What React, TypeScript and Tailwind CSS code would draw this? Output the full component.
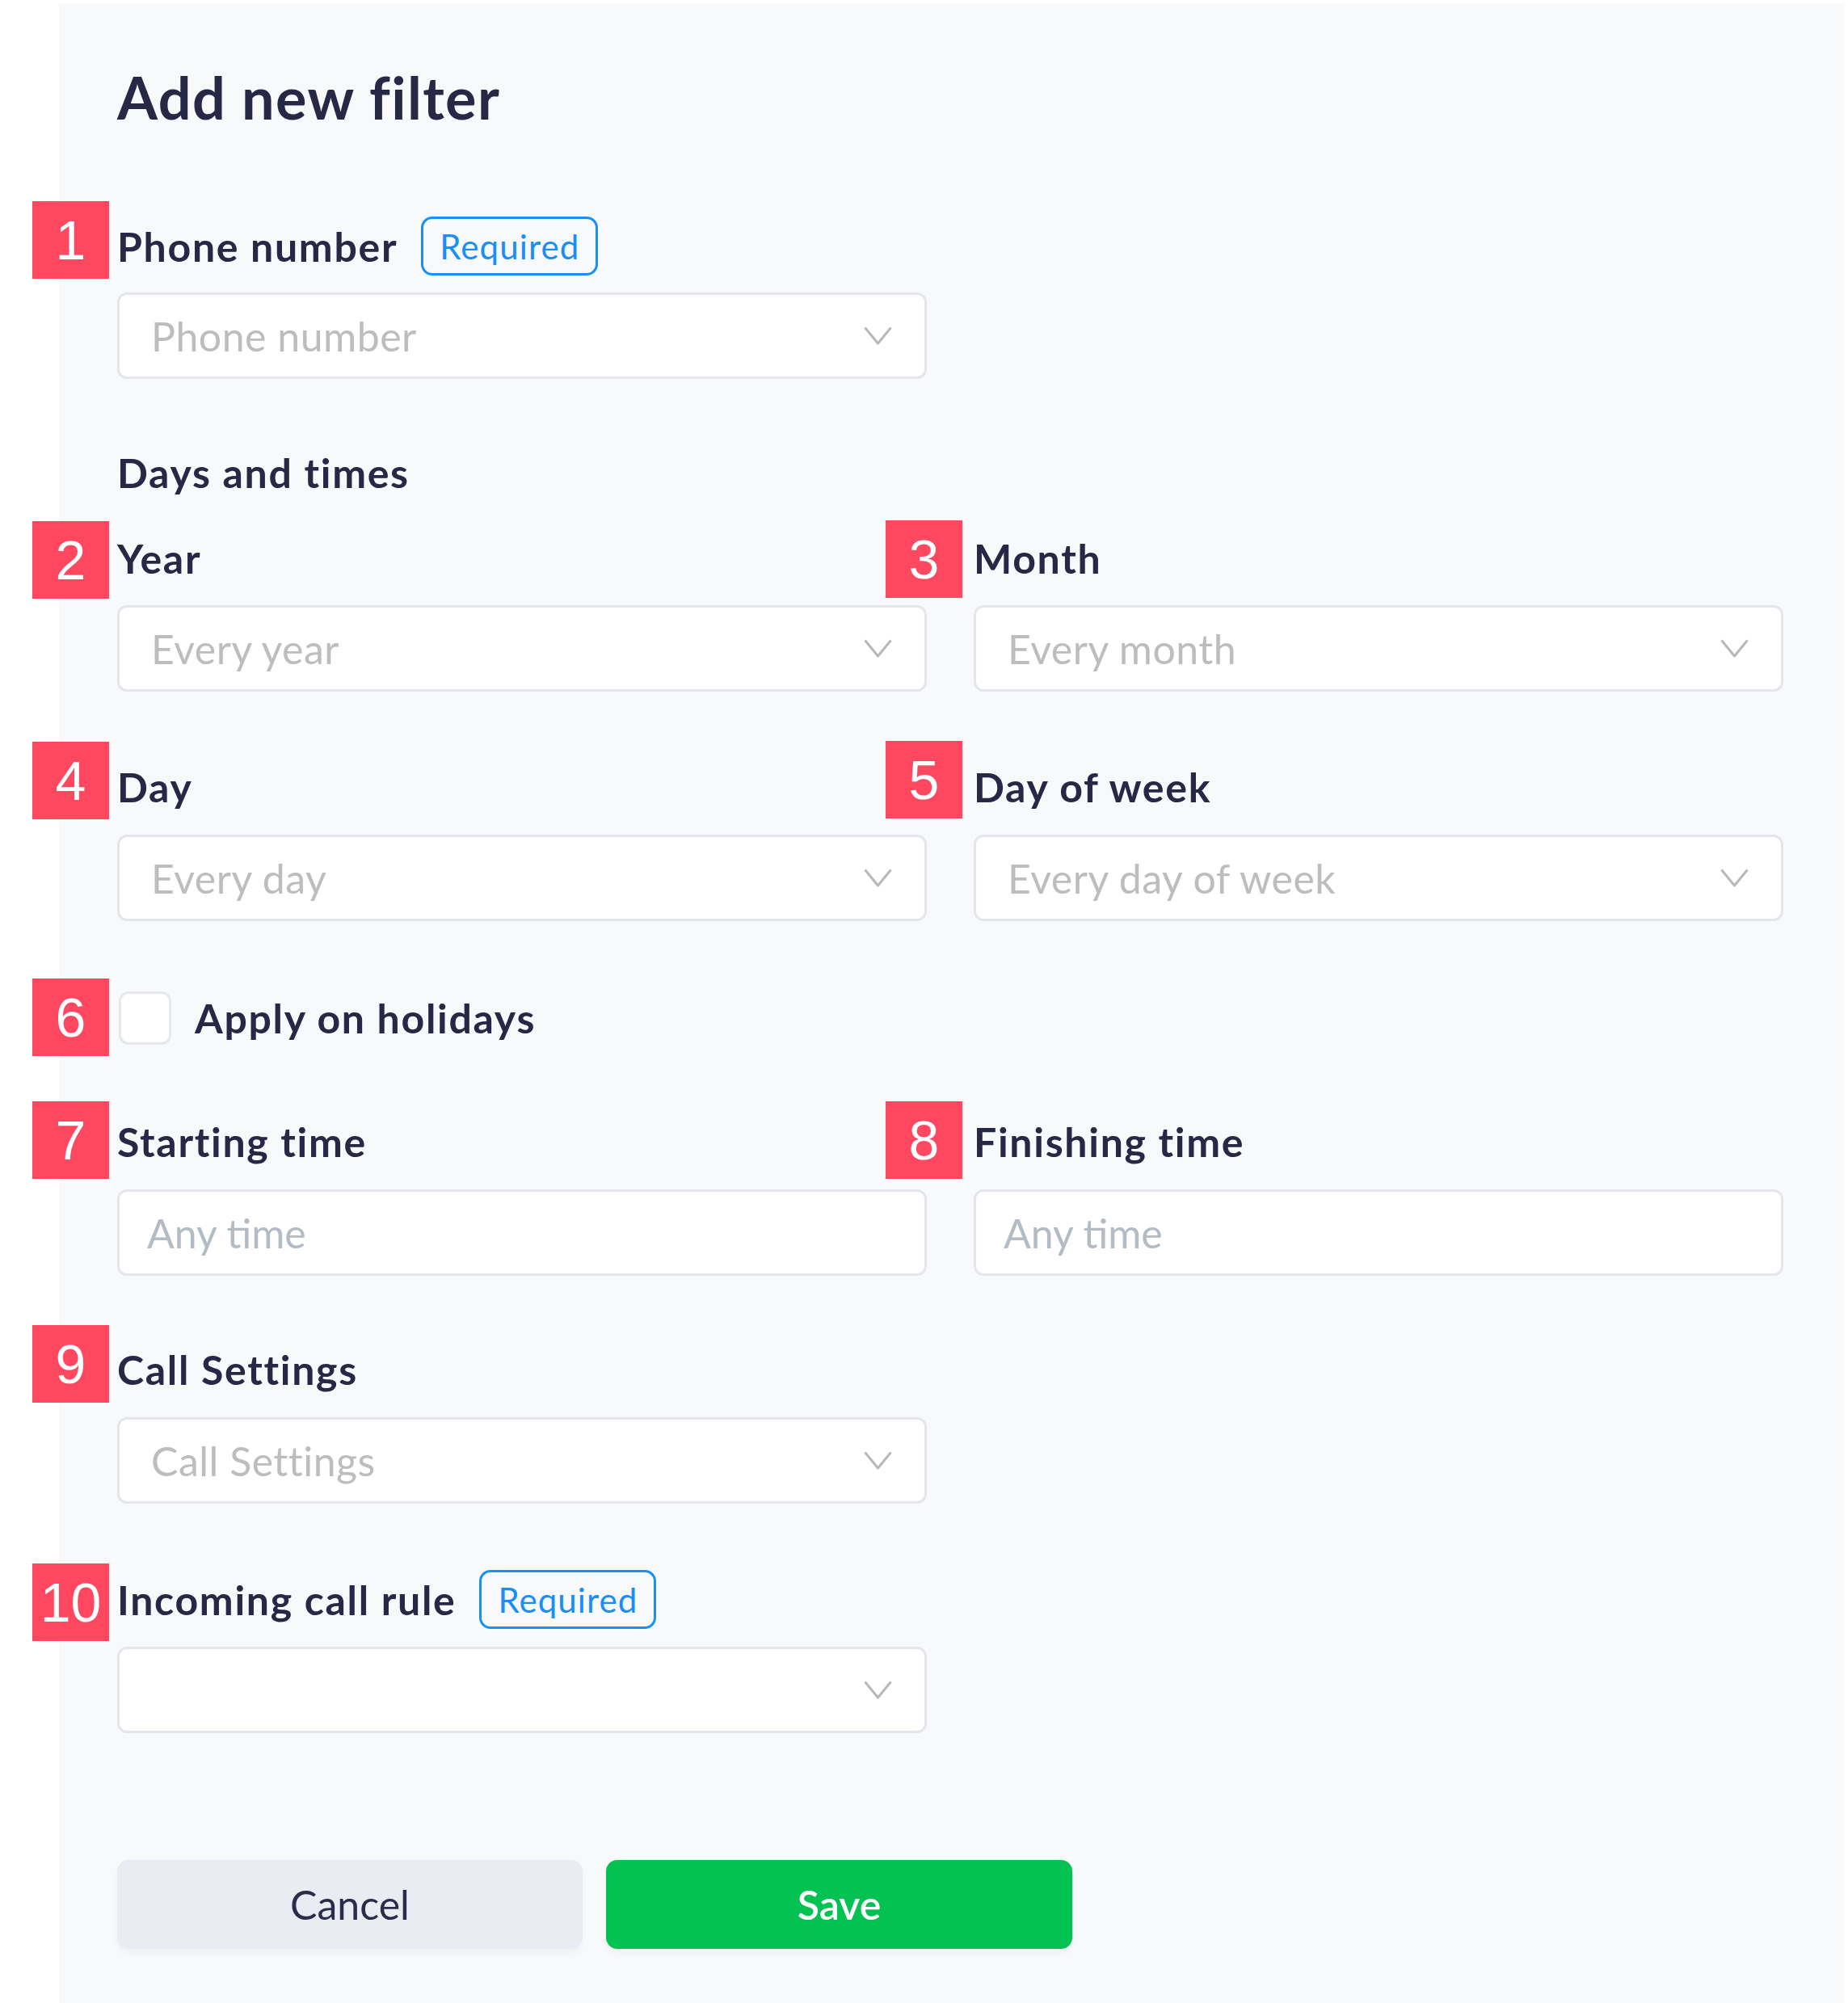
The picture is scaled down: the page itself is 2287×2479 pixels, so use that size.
import React from "react";

const font = { fontFamily: "Lato, 'Noto Sans', sans-serif" };

function Marker({ n, className }: { n: string; className: string }) {
  return (
    <div
      className={`absolute flex h-[96px] w-[95px] items-center justify-center bg-[#ff4760] text-[68px] leading-none text-white ${className}`}
      style={{ fontFamily: "'Liberation Sans', Arial, sans-serif" }}
    >
      {n}
    </div>
  );
}

function Required() {
  return (
    <span className="flex h-[73px] items-center rounded-[14px] border-[3px] border-[#1890f5] px-[20px] text-[42px] leading-none tracking-[1.1px] text-[#1a8ef5]">
      Required
    </span>
  );
}

function Chevron() {
  return (
    <svg width="35" height="23" viewBox="0 0 35 23" fill="none" className="shrink-0">
      <path d="M1.5 1.5 L17.5 21 L33.5 1.5" stroke="#b8b8b8" strokeWidth="3" strokeLinejoin="round" />
    </svg>
  );
}

function Select({ placeholder }: { placeholder?: string }) {
  return (
    <div className="flex h-[107px] items-center justify-between rounded-[12px] border-[3px] border-[#e4e6eb] bg-white pl-[39px] pr-[40px]">
      <span className="text-[50px] leading-none tracking-[0.5px] text-[#bdbdbd]">{placeholder}</span>
      <Chevron />
    </div>
  );
}

function TextInput({ placeholder }: { placeholder: string }) {
  return (
    <div className="flex h-[107px] items-center rounded-[12px] border-[3px] border-[#e4e6eb] bg-white pl-[34px]">
      <span className="text-[50px] leading-none text-[#b3bbc5]">{placeholder}</span>
    </div>
  );
}

function Label({ children, badge }: { children: React.ReactNode; badge?: boolean }) {
  return (
    <div className="flex h-[73px] items-center gap-[29px]">
      <span className="text-[50px] font-bold leading-none tracking-[1.7px] text-[#272846]">{children}</span>
      {badge && <Required />}
    </div>
  );
}

export default function App() {
  return (
    <div className="min-h-screen bg-white" style={font}>
      <div className="ml-[73px] mr-[5px] mt-[4px] min-h-[2475px] bg-[#f8f9fa] pl-[72px] pt-[80px]">
        <h1 className="text-[72px] font-bold leading-none tracking-[1.4px] text-[#272846]">Add new filter</h1>

        {/* 1 */}
        <div className="relative mt-[112px] w-[1002px]">
          <Marker n="1" className="left-[-105px] top-[-19px]" />
          <Label badge>Phone number</Label>
          <div className="mt-[21px]">
            <Select placeholder="Phone number" />
          </div>
        </div>

        <h2 className="mt-[91px] text-[50px] font-bold leading-none tracking-[1.7px] text-[#272846]">Days and times</h2>

        {/* 2 / 3 */}
        <div className="mt-[44px] grid grid-cols-[1002px_1002px] gap-x-[58px]">
          <div className="relative">
            <Marker n="2" className="left-[-105px] top-[-9px]" />
            <Label>Year</Label>
            <div className="mt-[22px]">
              <Select placeholder="Every year" />
            </div>
          </div>
          <div className="relative">
            <Marker n="3" className="left-[-109px] top-[-10px]" />
            <Label>Month</Label>
            <div className="mt-[22px]">
              <Select placeholder="Every month" />
            </div>
          </div>
        </div>

        {/* 4 / 5 */}
        <div className="mt-[81px] grid grid-cols-[1002px_1002px] gap-x-[58px]">
          <div className="relative">
            <Marker n="4" className="left-[-105px] top-[-19px]" />
            <Label>Day</Label>
            <div className="mt-[23px]">
              <Select placeholder="Every day" />
            </div>
          </div>
          <div className="relative">
            <Marker n="5" className="left-[-109px] top-[-20px]" />
            <Label>Day of week</Label>
            <div className="mt-[23px]">
              <Select placeholder="Every day of week" />
            </div>
          </div>
        </div>

        {/* 6 */}
        <div className="relative mt-[87px] flex h-[66px] items-center gap-[29px]">
          <Marker n="6" className="left-[-105px] top-[-16px]" />
          <div className="ml-[2px] h-[66px] w-[65px] rounded-[12px] border-[3px] border-[#e6e8ec] bg-white" />
          <span className="text-[50px] font-bold leading-none tracking-[1.7px] text-[#272846]">Apply on holidays</span>
        </div>

        {/* 7 / 8 */}
        <div className="mt-[83px] grid grid-cols-[1002px_1002px] gap-x-[58px]">
          <div className="relative">
            <Marker n="7" className="left-[-105px] top-[-13px]" />
            <Label>Starting time</Label>
            <div className="mt-[23px]">
              <TextInput placeholder="Any time" />
            </div>
          </div>
          <div className="relative">
            <Marker n="8" className="left-[-109px] top-[-13px]" />
            <Label>Finishing time</Label>
            <div className="mt-[23px]">
              <TextInput placeholder="Any time" />
            </div>
          </div>
        </div>

        {/* 9 */}
        <div className="relative mt-[79px] w-[1002px]">
          <Marker n="9" className="left-[-105px] top-[-18px]" />
          <Label>Call Settings</Label>
          <div className="mt-[23px]">
            <Select placeholder="Call Settings" />
          </div>
        </div>

        {/* 10 */}
        <div className="relative mt-[82px] w-[1002px]">
          <Marker n="10" className="left-[-105px] top-[-8px]" />
          <Label badge>Incoming call rule</Label>
          <div className="mt-[22px]">
            <Select />
          </div>
        </div>

        <div className="mt-[157px] flex gap-[29px] pb-[60px]">
          <button className="h-[110px] w-[576px] rounded-[14px] bg-[#e9edf3] text-[50px] leading-none text-[#2b2c4b] shadow-[0_6px_6px_rgba(0,0,0,0.03)]">
            Cancel
          </button>
          <button className="h-[110px] w-[577px] rounded-[14px] bg-[#04c252] text-[50px] font-semibold leading-none text-white shadow-[0_6px_6px_rgba(0,0,0,0.03)]">
            Save
          </button>
        </div>
      </div>
    </div>
  );
}
